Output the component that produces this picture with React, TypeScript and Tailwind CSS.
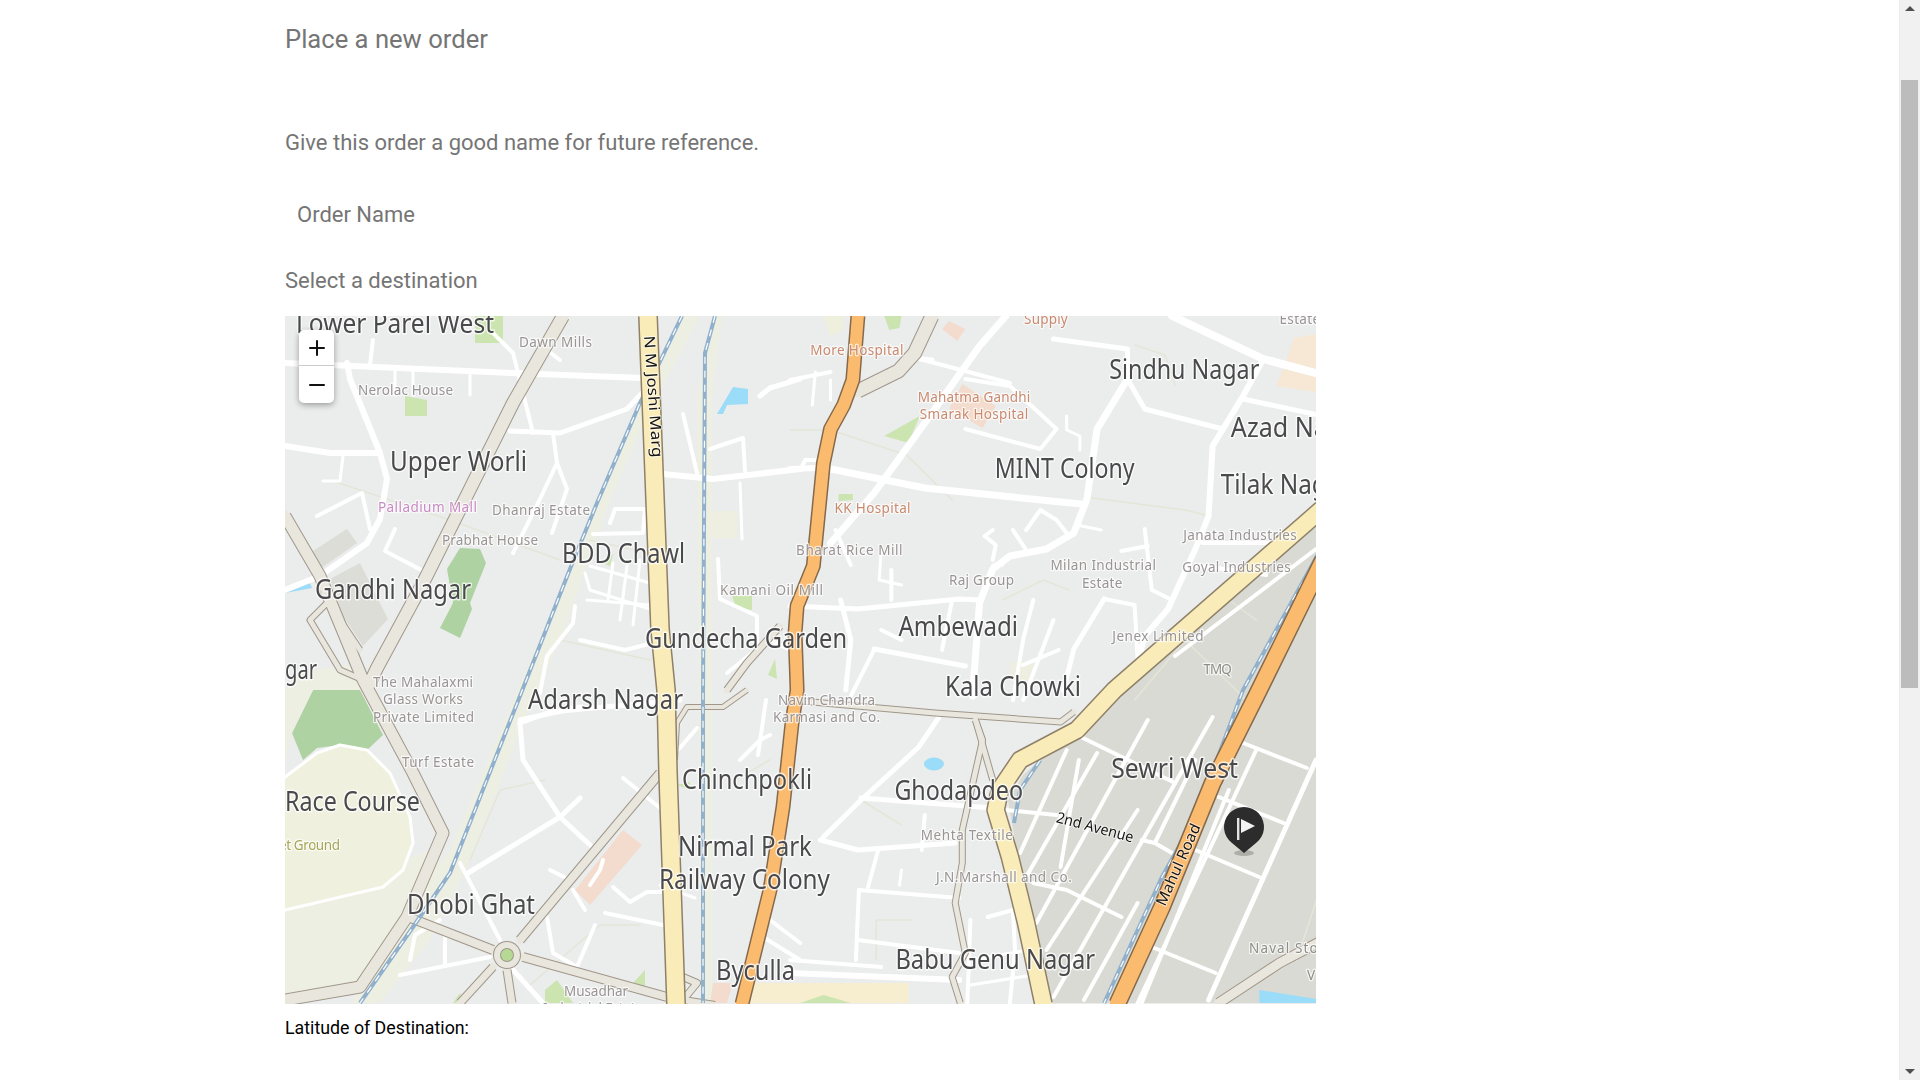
import { Plus, Minus } from "lucide-react";

const sx = (x: number) => (x > 790 ? 790 + (x - 790) * 1.0135 : x);
const T = (pts: string) =>
  pts
    .split(" ")
    .map((p) => {
      const [x, y] = p.split(",").map(Number);
      return `${sx(x)},${y}`;
    })
    .join(" ");

const areas: [string, string][] = [
  ["#eeefe3", "285,910 430,850 450,873 413,927 360,990 285,997"],
  ["#eeefe3", "597,503 640,403 682,316 700,316 650,410 610,500 560,640 520,730 470,860 430,940 380,1003 350,1003 400,927 450,850"],
  ["#eeefe3", "712,316 722,316 712,400 712,1003 700,1003 697,400"],
  ["#eff0dd", "285,777 317,753 340,745 367,750 390,773 410,817 413,843 403,870 383,887 285,910"],
  ["#eeefe0", "710,511 737,511 737,538 710,538"],
  ["#eeefe0", "1007,662 1030,662 1030,680 1007,680"],
  ["#d9dad3", "1316,520 1180,640 1065,735 1020,775 1005,800 1040,1003 1316,1003"],
  ["#dcddd6", "310,553 347,529 357,543 320,569"],
  ["#dcddd6", "330,579 360,563 388,619 363,646 343,616"],
  ["#aed2a2", "460,548 480,549 486,563 470,603 472,609 460,638 440,628 453,603 447,569"],
  ["#aed2a2", "292,733 313,690 340,684 360,690 383,735 367,750 340,745 317,748 303,760"],
  ["#eeefe3", "285,690 300,672 350,665 370,690 313,690 292,733 285,760"],
  ["#cbe4b0", "405,396 427,400 427,416 405,416"],
  ["#cbe4b0", "475,316 503,316 503,343 475,343"],
  ["#cbe4b0", "545,990 557,980 573,1003 545,1003"],
  ["#cbe4b0", "633,983 645,970 645,987"],
  ["#cbe4b0", "453,1003 460,993 463,1003"],
  ["#cbe4b0", "883,436 918,416 907,443"],
  ["#cbe4b0", "883,316 900,316 898,328 888,330"],
  ["#eef0dd", "823,316 843,316 843,330 830,336"],
  ["#cbe4b0", "838,494 852,494 852,500 838,501"],
  ["#cbe4b0", "732,596 752,596 752,610 736,607"],
  ["#cbe4b0", "600,562 613,554 610,566"],
  ["#cbe4b0", "677,785 690,782 690,790"],
  ["#cbe4b0", "768,675 775,659 777,679"],
  ["#f3dccd", "623,830 642,845 590,905 575,890"],
  ["#f3dccd", "940,329 947,321 963,329 955,341"],
  ["#f3dccd", "960,384 993,406 980,428 947,409"],
  ["#f6e8d4", "1280,359 1287,338 1316,333 1316,393 1270,386"],
  ["#f3dccd", "710,1003 713,983 733,983 727,1003"],
  ["#f6eecf", "733,1003 745,983 907,983 907,1003"],
  ["#cbe4b0", "800,1003 823,995 850,1003"],
  ["#9bdcf8", "733,387 748,389 748,404 727,405 723,414 717,414"],
  ["#9bdcf8", "285,589 310,583 312,588 285,593"],
  ["#9bdcf8", "1253,990 1316,1000 1316,1003 1253,1003"],
];

const minor = [
  "590,540 680,560", "830,430 905,455 950,500", "1080,497 1180,510 1200,515", "1130,345 1160,355 1170,385",
  "790,430 830,430", "560,640 650,660 665,650", "330,480 450,520 560,560", "470,860 500,790 545,780",
  "530,985 600,925 640,925", "1065,590 1040,580 1000,600", "1210,590 1250,620", "860,800 900,825",
  "875,960 875,920 910,920", "735,780 770,760", "1130,700 1180,640 1240,700", "1290,960 1316,880",
];

const white: [number, string][] = [
  [6, "285,363 513,373 590,376 642,378"], [6, "347,363 350,379 380,453 387,479 380,519 367,543 320,576 285,590"],
  [6, "285,446 330,453 380,453"], [4, "493,333 513,353 533,433"], [5, "510,431 560,433 627,409 642,393"],
  [4, "553,433 557,463 540,499 513,553"], [4, "557,463 567,489 552,533"], [6, "663,474 713,479 800,469"],
  [6, "790,469 817,468"], [7, "830,469 923,488 1077,504"],
  [7, "1123,379 1093,429 1083,499 1070,533 1043,549 1007,556 990,569 977,603 970,696"],
  [7, "1003,316 977,346 923,423 873,493 830,543"], [8, "1167,316 1257,359 1316,375"],
  [5, "1050,339 1123,349 1123,379"], [5, "1123,379 1140,409 1217,429"],
  [6, "1257,359 1237,396 1207,446 1203,516 1190,549 1163,609 1140,636 1133,663"], [5, "1237,399 1316,416"],
  [4, "963,379 1007,386 1053,429 1037,449 963,429"], [4, "918,359 1007,383"], [3, "1063,416 1063,430 1076,436 1076,450"],
  [4, "990,530 982,536 993,545 990,560"], [4, "1010,530 1023,550"], [4, "1023,530 1037,510 1053,520 1063,533"],
  [3, "1073,525 1097,530"], [4, "1140,529 1147,590 1167,600"], [4, "1117,551 1143,546"],
  [5, "790,606 857,609 957,599 977,600"], [5, "873,649 963,666"], [4, "873,650 850,696"],
  [5, "1100,599 1070,649 1060,690"], [4, "1100,599 1130,605 1133,660"], [4, "1197,543 1273,543"], [4, "1190,565 1260,575"],
  [4, "1170,656 1309,549"], [4, "1073,735 1170,783"], [4, "1017,853 1063,750"], [4, "1023,877 1093,753"],
  [4, "1033,923 1143,720"], [4, "1057,867 1075,760"], [4, "1043,950 1133,810"], [4, "1050,997 1207,717"],
  [4, "1080,1000 1133,903"], [4, "1030,883 1063,890 1117,917"], [4, "1003,810 1053,815"], [4, "1137,840 1150,843 1167,853"],
  [4, "1150,843 1190,760"], [4, "1237,743 1300,768"], [4, "1213,797 1277,823"], [4, "1190,850 1253,877"],
  [4, "1147,947 1210,973"], [5, "1309,760 1203,1000"], [4, "1250,750 1133,1003"], [4, "1223,790 1137,1003"],
  [5, "823,837 860,800 917,747 937,717"], [5, "860,798 990,808"], [5, "820,840 857,850 953,843"],
  [4, "877,850 867,887"], [4, "858,890 957,898"], [4, "858,890 855,960"], [4, "857,940 957,953"],
  [4, "790,960 880,967"], [6, "790,973 957,980"], [4, "923,815 920,850"], [3, "900,870 898,885"],
  [4, "985,917 1010,910 1012,950 1007,1003"], [4, "968,920 965,1003"], [3, "968,960 1025,950"], [3, "968,985 1030,975"],
  [5, "468,873 560,817 580,798"], [5, "520,723 523,760 560,817 590,845"], [5, "520,720 580,707"], [5, "520,723 550,712 680,700"],
  [3, "285,910 383,887 403,870 413,843 410,817 390,773 367,750 340,745 317,753 285,777"],
  [4, "460,863 500,940"], [4, "400,975 490,957"], [4, "410,960 415,935 440,920"], [4, "445,930 445,965"],
  [5, "513,970 543,1003"], [4, "595,925 577,967"], [4, "547,917 553,953 577,967"], [4, "605,913 663,925"],
  [4, "613,887 630,902 647,892 663,892"], [4, "623,778 660,808"], [4, "603,860 600,870 590,885"], [4, "573,890 585,910"],
  [4, "550,870 570,880"], [4, "770,920 800,943"], [4, "763,937 800,960"], [4, "678,750 697,728"], [3, "660,885 695,898"],
  [3, "585,573 590,590 650,609"], [3, "590,566 650,583"], [3, "613,563 608,600"], [3, "627,566 620,620"], [3, "640,560 633,625"],
  [3, "587,600 650,605"], [4, "575,606 573,623 547,656 540,693"], [4, "718,559 720,599 757,616 757,649 727,673"],
  [4, "593,534 643,533 645,509 615,509 610,523"], [4, "683,414 697,473"], [3, "740,483 742,539"], [4, "710,449 743,438 745,471"],
  [5, "760,396 770,388 800,379"], [4, "317,516 362,493 370,529"], [4, "395,529 385,551 427,573"], [3, "343,456 340,481 323,481"],
  [4, "580,640 625,650 665,640"], [3, "395,370 395,395"], [3, "413,370 413,395"], [3, "470,375 470,395"], [4, "373,340 370,365"],
  [4, "790,380 830,372"], [3, "815,372 812,405"], [5, "920,359 930,360"], [3, "830,380 830,400"],
  [4, "766,700 758,755"], [4, "740,760 760,740 770,735"], [4, "770,640 790,650 800,625"], [5, "840,600 850,640 845,690"],
  [4, "800,470 805,460 817,460"], [4, "835,530 850,565"], [4, "900,640 880,630"], [4, "940,650 950,600"], [3, "1000,565 990,565"],
  [3, "880,550 878,580 900,585"], [4, "1030,600 1020,640 1010,700"], [4, "1050,620 1020,700"], [4, "1055,650 1020,665"],
  [4, "560,360 540,345"], [4, "890,600 890,570"],
];

const beige: [number, string][] = [
  [12, "563,316 513,403 423,583 377,668 370,683"], [11, "285,516 320,576 363,680 413,773 443,833 407,917 360,987 285,1000"],
  [8, "660,773 520,940"], [8, "408,917 493,950"], [8, "523,957 667,997"], [7, "493,967 460,1003"], [7, "507,970 512,1003"],
  [13, "930,316 913,353 897,371 857,391"], [5, "790,700 933,713 1057,722 1070,712"], [4, "747,690 723,707 687,707 677,723 675,760"],
  [6, "780,626 747,663 727,690"], [5, "973,720 980,740 960,830 960,863 953,903 963,953 950,977 958,1003"], [5, "973,720 990,780"],
  [9, "1316,940 1273,963 1213,1003"], [6, "683,977 697,983 683,1000 715,1005"], [5, "320,580 340,620 360,650"], [5, "330,600 310,620 340,670 370,683"],
];

const rails = [
  "682,316 640,403 597,503 570,569 520,696 450,873 413,927 360,1003", "715,316 705,353 703,696 703,1003",
  "1316,545 1237,690 1190,817 1157,877 1100,1003", "1037,760 1017,790 1011,823",
];

const yellow1 = "648,316 660,629 666,690 668,773 673,917 676,1004";
const yellow2 = "1316,508 1110,690 1073,730 1017,760 997,790 993,810 1007,857 1023,923 1040,1004";
const orange1 = "857,316 852,380 843,405 830,429 823,463 813,566 797,606 795,633 797,690 792,723 783,807 770,890 742,1004";
const orange2 = "1316,560 1250,696 1207,783 1157,907 1113,1004";

type L = [string, number, number, number];
const big: L[] = [
  ["Lower Parel West", 296, 333, 198], ["Upper Worli", 390, 471, 137], ["BDD Chawl", 562, 563, 123], ["Gandhi Nagar", 315, 599, 156],
  ["Gundecha Garden", 645, 648, 202], ["gar", 285, 679, 32], ["Adarsh Nagar", 528, 709, 155], ["Race Course", 285, 811, 135],
  ["Dhobi Ghat", 407, 914, 128], ["Chinchpokli", 682, 789, 130], ["Nirmal Park", 678, 856, 134], ["Railway Colony", 659, 889, 171],
  ["Byculla", 716, 980, 79], ["Ambewadi", 897, 636, 118], ["Kala Chowki", 943, 696, 134], ["MINT Colony", 992, 478, 138],
  ["Sindhu Nagar", 1105, 379, 148], ["Azad Nagar", 1225, 437, 135], ["Tilak Nagar", 1215, 494, 128], ["Ghodapdeo", 893, 800, 127],
  ["Sewri West", 1107, 778, 125], ["Babu Genu Nagar", 894, 969, 197],
];
const small: [string, number, number, number, string][] = [
  ["Dawn Mills", 519, 347, 73, "#9a9494"], ["Nerolac House", 358, 395, 95, "#9a9494"], ["Palladium Mall", 378, 512, 99, "#c98bc4"],
  ["Dhanraj Estate", 492, 515, 98, "#9a9494"], ["Prabhat House", 442, 545, 96, "#9a9494"], ["Kamani Oil Mill", 720, 595, 103, "#9a9494"],
  ["Bharat Rice Mill", 796, 555, 105, "#9a9494"], ["More Hospital", 810, 355, 92, "#c98a6e"], ["Supply", 1021, 324, 43, "#c98a6e"],
  ["Mahatma Gandhi", 916, 402, 111, "#c98a6e"], ["Smarak Hospital", 918, 419, 107, "#c98a6e"], ["KK Hospital", 834, 513, 75, "#c98a6e"],
  ["Raj Group", 947, 585, 64, "#9a9494"], ["Milan Industrial", 1047, 570, 104, "#9a9494"], ["Estate", 1078, 588, 40, "#9a9494"],
  ["Janata Industries", 1178, 540, 112, "#9a9494"], ["Goyal Industries", 1177, 572, 107, "#9a9494"], ["Jenex Limited", 1108, 641, 90, "#9a9494"],
  ["TMQ", 1198, 674, 28, "#8e8e88"], ["Estate", 1273, 324, 40, "#9a9494"], ["Navin Chandra", 778, 705, 97, "#9a9494"],
  ["Karmasi and Co.", 773, 722, 107, "#9a9494"], ["Mehta Textile", 919, 840, 91, "#9a9494"], ["J.N.Marshall and Co.", 934, 882, 134, "#9a9494"],
  ["Naval Stores", 1243, 953, 90, "#8e8e88"], ["V", 1300, 980, 8, "#8e8e88"], ["The Mahalaxmi", 373, 687, 100, "#9a9494"],
  ["Glass Works", 383, 704, 80, "#9a9494"], ["Private Limited", 373, 722, 101, "#9a9494"], ["Turf Estate", 402, 767, 72, "#9a9494"],
  ["Cricket Ground", 250, 850, 90, "#a6a658"], ["Musadhar", 564, 996, 64, "#9a9494"], ["Industrial Estate", 543, 1013, 100, "#9a9494"],
];
const road: [string, number, number, number, number][] = [
  ["N M Joshi Marg", 644, 336, 122, 86], ["2nd Avenue", 1052, 822, 78, 15], ["Mahul Road", 1160, 907, 87, -66],
];

const mapFont = "'Noto Sans','Open Sans',sans-serif";

function Line({ pts, w, c, cap = "round" }: { pts: string; w: number; c: string; cap?: "round" | "butt" }) {
  return <polyline points={T(pts)} fill="none" stroke={c} strokeWidth={w} strokeLinejoin="round" strokeLinecap={cap} />;
}

function MapArt() {
  return (
    <svg viewBox="285 316 1031 688" width="1031" height="688" className="block blur-[0.35px]">
      <rect x="285" y="316" width="1031" height="688" fill="#ebecec" />
      {areas.map(([c, p], i) => <polygon key={i} points={T(p)} fill={c} />)}
      <ellipse cx={sx(932)} cy="764" rx="10" ry="6.5" fill="#9bdcf8" />
      {minor.map((p, i) => <Line key={i} pts={p} w={1.5} c="#e4e6d8" />)}
      {white.map(([w, p], i) => <Line key={i} pts={p} w={w} c="#ffffff" />)}
      {beige.map(([w, p], i) => <Line key={i} pts={p} w={w + 2} c="#a0978a" cap="butt" />)}
      {beige.map(([w, p], i) => <Line key={i} pts={p} w={w} c="#e9e6de" />)}
      <circle cx="507" cy="955" r="14" fill="#a0978a" />
      <circle cx="507" cy="955" r="13" fill="#e9e6de" />
      <circle cx="507" cy="955" r="7" fill="#a0978a" />
      <circle cx="507" cy="955" r="6" fill="#b5d894" />
      {rails.map((p, i) => <Line key={i} pts={p} w={4} c="#90b0cc" cap="butt" />)}
      {rails.map((p, i) => (
        <polyline key={i} points={T(p)} fill="none" stroke="#ffffff" strokeWidth={1.2} strokeDasharray="7 7" />
      ))}
      <Line pts={yellow1} w={20} c="#8f8069" cap="butt" />
      <Line pts={yellow1} w={17} c="#f9ecb8" />
      <Line pts={yellow2} w={19} c="#8f8069" cap="butt" />
      <Line pts={yellow2} w={16} c="#f9ecb8" />
      <Line pts={orange1} w={15} c="#85694c" cap="butt" />
      <Line pts={orange1} w={12} c="#fbbb6e" />
      <Line pts={orange2} w={18} c="#85694c" cap="butt" />
      <Line pts={orange2} w={15} c="#fbbb6e" />
      {big.map(([t, x, y, w]) => (
        <text key={t} x={sx(x)} y={y} textLength={x > 790 ? w * 1.0135 : w} lengthAdjust="spacingAndGlyphs" fontFamily={mapFont} fontSize={27} fill="#4a4a4c" stroke="#ffffff" strokeOpacity={0.75} strokeWidth={3} paintOrder="stroke" strokeLinejoin="round">{t}</text>
      ))}
      {small.map(([t, x, y, w, c], i) => (
        <text key={i} x={sx(x)} y={y} textLength={x > 790 ? w * 1.0135 : w} lengthAdjust="spacing" fontFamily={mapFont} fontSize={13.5} fill={c} stroke="#ffffff" strokeOpacity={0.7} strokeWidth={2.5} paintOrder="stroke" strokeLinejoin="round">{t}</text>
      ))}
      {road.map(([t, x, y, w, r]) => (
        <text key={t} x={sx(x)} y={y} textLength={x > 790 ? w * 1.0135 : w} lengthAdjust="spacingAndGlyphs" transform={`rotate(${r} ${sx(x)} ${y})`} fontFamily={mapFont} fontSize={15} fill="#151515" stroke="#ffffff" strokeOpacity={0.6} strokeWidth={2} paintOrder="stroke">{t}</text>
      ))}
      <ellipse cx="1244" cy="853" rx="10" ry="3" fill="#000000" opacity={0.2} />
      <path d="M1244 853 L1232 843 A20 20 0 1 1 1256 843 Z" fill="#2c2c2c" />
      <rect x="1237" y="818" width="2.4" height="22" fill="#e4e4e4" />
      <polygon points="1241,819 1255,826 1241,833" fill="#f2f2f2" />
    </svg>
  );
}

export default function App() {
  return (
    <div className="flex h-[1080px] w-[1920px] overflow-hidden bg-white" style={{ fontFamily: "Roboto, sans-serif" }}>
      <main className="flex-1 pl-[285px]">
        <h1 className="pt-[22px] text-[25.6px] leading-[34px] font-normal text-[#757575]">Place a new order</h1>
        <p className="mt-[72px] text-[22px] leading-[30px] text-[#757575]">Give this order a good name for future reference.</p>
        <div className="mt-[42px] pl-[12px] text-[22px] leading-[30px] text-[#757575]">Order Name</div>
        <p className="mt-[36px] text-[22px] leading-[30px] text-[#757575]">Select a destination</p>
        <div className="relative mt-[20px] h-[688px] w-[1031px] overflow-hidden">
          <MapArt />
          <div className="absolute left-[14px] top-[14px] flex w-[35px] flex-col rounded-[5px] bg-white shadow-[0_2px_6px_rgba(0,0,0,0.35)]">
            <div className="flex h-[36px] items-center justify-center border-b border-[#cccccc] text-[#111111]"><Plus size={24} strokeWidth={2} /></div>
            <div className="flex h-[37px] items-center justify-center text-[#111111]"><Minus size={24} strokeWidth={2} /></div>
          </div>
        </div>
        <p className="mt-[12px] text-[17.8px] leading-[24px] text-black">Latitude of Destination:</p>
      </main>
      <aside className="flex h-[1080px] w-[21px] flex-col border-l border-[#ececec] bg-[#f1f1f1] pl-[1px] pr-[2px]">
        <div className="flex h-[17px] items-center justify-center">
          <div className="h-0 w-0 border-x-[5px] border-b-[5px] border-x-transparent border-b-[#505050]" />
        </div>
        <div className="mt-[63px] h-[608px] bg-[#bcbcbc]" />
        <div className="flex-1" />
        <div className="flex h-[17px] items-center justify-center">
          <div className="h-0 w-0 border-x-[5px] border-t-[5px] border-x-transparent border-t-[#505050]" />
        </div>
      </aside>
    </div>
  );
}
